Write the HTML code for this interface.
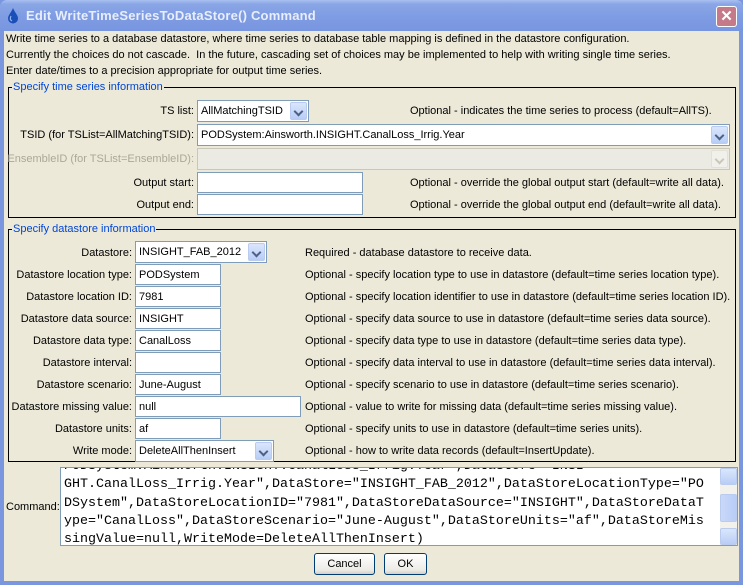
<!DOCTYPE html>
<html><head><meta charset="utf-8"><style>
*{box-sizing:border-box;margin:0;padding:0}
body{width:743px;height:585px;overflow:hidden;background:#7a96df;font-family:"Liberation Sans",Tahoma,sans-serif;font-size:11px;color:#000;position:relative}
.title{position:absolute;left:0;top:0;width:743px;height:31px;background:linear-gradient(#a9c0f0 0,#8aa6e6 4px,#7f9de3 50%,#7895e0 100%);border-radius:7px 7px 0 0}
.title .t{position:absolute;left:26px;top:8px;color:#e8eefc;font-weight:bold;font-size:13px;letter-spacing:0.2px}
.close{position:absolute;left:716px;top:6px;width:21px;height:21px;border:1px solid #fff;border-radius:3px;background:#c57a8a;color:#fff;font-size:15px;text-align:center;line-height:19px;font-weight:bold}
.body{position:absolute;left:4px;top:31px;width:735px;height:550px;background:#ece9d8}
.a{position:absolute;white-space:nowrap}
.fs{position:absolute;border:1px solid #000}
.lg{position:absolute;background:#ece9d8;color:#0046d5;padding:0 1px;white-space:nowrap}
.lab{position:absolute;text-align:right;white-space:nowrap}
.tx{position:absolute;background:#fff;border:1px solid #7f9db9;height:21px;padding:4px 3px 0;white-space:nowrap}
.cb{position:absolute;background:#fff;border:1px solid #7f9db9;height:22px;padding:4px 3px 0;white-space:nowrap}
.cb .btn{position:absolute;right:1px;top:1px;width:17px;height:18px;background:linear-gradient(#dbe6fc,#b8cdf6);border-radius:2px;border:1px solid #b9cbef}
.cb .btn:after{content:"";position:absolute;left:4px;top:5px;width:5px;height:5px;border-right:2px solid #4d6185;border-bottom:2px solid #4d6185;transform:rotate(45deg)}
.dis{background:#ebeae3;border-color:#c9c7ba}
.dis .btn{background:#f1f0ea;border-color:#e3e1d6}
.dis .btn:after{border-color:#c9c7ba}
.mono{font-family:"Liberation Mono",monospace;font-size:13.33px}
.bt{position:absolute;height:22px;border:1px solid #003c74;border-radius:3px;background:linear-gradient(#fff,#ecebe6 80%,#d6d0c5);text-align:center;line-height:20px}
</style></head><body>
<div class="title">
<svg style="position:absolute;left:7px;top:8px" width="12" height="16" viewBox="0 0 12 16"><path d="M6 0C4 5 1 7 1 10.5A5 5 0 0 0 11 10.5C11 7 8 5 6 0Z" fill="#1a4fb8"/><path d="M4 8C3 10 3 12 5 13" stroke="#8fb4f0" stroke-width="1.2" fill="none"/></svg>
<div class="t">Edit WriteTimeSeriesToDataStore() Command</div>
<div class="close">✕</div>
</div>
<div class="body">
<div class="a" style="left:2px;top:2px">Write time series to a database datastore, where time series to database table mapping is defined in the datastore configuration.</div>
<div class="a" style="left:2px;top:18px">Currently the choices do not cascade.&nbsp; In the future, cascading set of choices may be implemented to help with writing single time series.</div>
<div class="a" style="left:2px;top:34px">Enter date/times to a precision appropriate for output time series.</div>

<div class="fs" style="left:4px;top:56px;width:728px;height:131px"></div>
<div class="lg" style="left:8px;top:50px">Specify time series information</div>
<div class="lab" style="left:0;width:190px;top:74px">TS list:</div>
<div class="cb" style="left:193px;top:69px;width:112px">AllMatchingTSID<div class="btn"></div></div>
<div class="a" style="left:406px;top:74px">Optional - indicates the time series to process (default=AllTS).</div>
<div class="lab" style="left:0;width:190px;top:98px">TSID (for TSList=AllMatchingTSID):</div>
<div class="cb" style="left:193px;top:93px;width:533px">PODSystem:Ainsworth.INSIGHT.CanalLoss_Irrig.Year<div class="btn"></div></div>
<div class="lab" style="left:0;width:190px;top:122px;color:#aca899">EnsembleID (for TSList=EnsembleID):</div>
<div class="cb dis" style="left:193px;top:117px;width:533px"><div class="btn"></div></div>
<div class="lab" style="left:0;width:190px;top:146px">Output start:</div>
<div class="tx" style="left:193px;top:141px;width:166px"></div>
<div class="a" style="left:406px;top:146px">Optional - override the global output start (default=write all data).</div>
<div class="lab" style="left:0;width:190px;top:168px">Output end:</div>
<div class="tx" style="left:193px;top:163px;width:166px"></div>
<div class="a" style="left:406px;top:168px">Optional - override the global output end (default=write all data).</div>

<div class="fs" style="left:4px;top:198px;width:728px;height:233px"></div>
<div class="lg" style="left:8px;top:192px">Specify datastore information</div>

<div class="lab" style="left:0;width:128px;top:216px">Datastore:</div>
<div class="cb" style="left:131px;top:210px;width:132px">INSIGHT_FAB_2012<div class="btn"></div></div>
<div class="a" style="left:301px;top:216px">Required - database datastore to receive data.</div>

<div class="lab" style="left:0;width:128px;top:238px">Datastore location type:</div>
<div class="tx" style="left:131px;top:233px;width:86px">PODSystem</div>
<div class="a" style="left:301px;top:238px">Optional - specify location type to use in datastore (default=time series location type).</div>

<div class="lab" style="left:0;width:128px;top:260px">Datastore location ID:</div>
<div class="tx" style="left:131px;top:255px;width:86px">7981</div>
<div class="a" style="left:301px;top:260px">Optional - specify location identifier to use in datastore (default=time series location ID).</div>

<div class="lab" style="left:0;width:128px;top:282px">Datastore data source:</div>
<div class="tx" style="left:131px;top:277px;width:86px">INSIGHT</div>
<div class="a" style="left:301px;top:282px">Optional - specify data source to use in datastore (default=time series data source).</div>

<div class="lab" style="left:0;width:128px;top:304px">Datastore data type:</div>
<div class="tx" style="left:131px;top:299px;width:86px">CanalLoss</div>
<div class="a" style="left:301px;top:304px">Optional - specify data type to use in datastore (default=time series data type).</div>

<div class="lab" style="left:0;width:128px;top:326px">Datastore interval:</div>
<div class="tx" style="left:131px;top:321px;width:86px"></div>
<div class="a" style="left:301px;top:326px">Optional - specify data interval to use in datastore (default=time series data interval).</div>

<div class="lab" style="left:0;width:128px;top:348px">Datastore scenario:</div>
<div class="tx" style="left:131px;top:343px;width:86px">June-August</div>
<div class="a" style="left:301px;top:348px">Optional - specify scenario to use in datastore (default=time series scenario).</div>

<div class="lab" style="left:0;width:128px;top:370px">Datastore missing value:</div>
<div class="tx" style="left:131px;top:365px;width:166px">null</div>
<div class="a" style="left:301px;top:370px">Optional - value to write for missing data (default=time series missing value).</div>

<div class="lab" style="left:0;width:128px;top:392px">Datastore units:</div>
<div class="tx" style="left:131px;top:387px;width:86px">af</div>
<div class="a" style="left:301px;top:392px">Optional - specify units to use in datastore (default=time series units).</div>

<div class="lab" style="left:0;width:128px;top:414px">Write mode:</div>
<div class="cb" style="left:131px;top:409px;width:139px">DeleteAllThenInsert<div class="btn"></div></div>
<div class="a" style="left:301px;top:414px">Optional - how to write data records (default=InsertUpdate).</div>

<div class="a" style="left:2px;top:470px">Command:</div>
<div style="position:absolute;left:56px;top:436px;width:678px;height:79px;background:#fff;border:1px solid #7f9db9;overflow:hidden">
<div class="mono" style="position:absolute;left:3px;top:-10px;line-height:18.3px;white-space:pre">PODSystem:Ainsworth.INSIGHT.CanalLoss_Irrig.Year",DataStore="INSI
GHT.CanalLoss_Irrig.Year",DataStore="INSIGHT_FAB_2012",DataStoreLocationType="PO
DSystem",DataStoreLocationID="7981",DataStoreDataSource="INSIGHT",DataStoreDataT
ype="CanalLoss",DataStoreScenario="June-August",DataStoreUnits="af",DataStoreMis
singValue=null,WriteMode=DeleteAllThenInsert)</div>
<div style="position:absolute;right:0;top:0;width:17px;height:77px;background:#f3f1ec">
<div style="position:absolute;left:0;top:0;width:17px;height:17px;background:linear-gradient(#dbe6fc,#b8cdf6);border:1px solid #b9cbef;border-radius:2px"></div>
<div style="position:absolute;left:0;top:26px;width:17px;height:28px;background:linear-gradient(90deg,#c9d8fa,#b8cdf6);border:1px solid #b9cbef;border-radius:2px"></div>
<div style="position:absolute;left:0;top:60px;width:17px;height:17px;background:linear-gradient(#dbe6fc,#b8cdf6);border:1px solid #b9cbef;border-radius:2px"></div>
</div>
</div>

<div class="bt" style="left:310px;top:522px;width:61px">Cancel</div>
<div class="bt" style="left:380px;top:522px;width:43px">OK</div>
</div>
</body></html>
